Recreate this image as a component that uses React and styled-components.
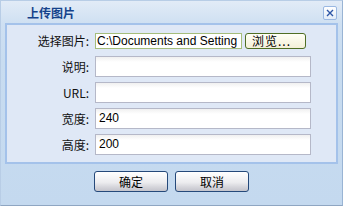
import React from "react";
import styled, { createGlobalStyle } from "styled-components";

const GlobalStyle = createGlobalStyle`
  html, body {
    margin: 0;
    padding: 0;
    background: #ffffff;
  }
  body {
    font-family: "Liberation Sans", "Noto Sans CJK SC", sans-serif;
    font-size: 12px;
  }
`;

const Dialog = styled.div`
  box-sizing: border-box;
  width: 343px;
  height: 206px;
  display: flex;
  flex-direction: column;
  background: linear-gradient(#e2ebf7 0px, #cfe0f2 22px, #c8dcf0 60px, #c4d9ef 100%);
  border: 1px solid #b8cde6;
  border-right-color: #99b4d4;
  border-bottom-color: #8fa6c2;
`;

const TitleBar = styled.div`
  height: 22px;
  display: flex;
  align-items: center;
  justify-content: space-between;
  padding: 0 5px 0 26px;
`;

const Title = styled.span`
  font-family: "Noto Sans CJK SC", sans-serif;
  font-weight: bold;
  font-size: 12px;
  color: #15428b;
  padding-top: 1px;
`;

const CloseButton = styled.button`
  box-sizing: border-box;
  width: 14px;
  height: 14px;
  padding: 0;
  margin-top: 1px;
  display: flex;
  align-items: center;
  justify-content: center;
  border: 1px solid #9ab8e2;
  border-radius: 2px;
  background: linear-gradient(#ffffff, #e2ecf8);
`;

const Panel = styled.div`
  margin: 0 4px 0 4px;
  border: 2px solid #a4c2ea;
  background: #dfe8f6;
  padding: 5px 24px 7px 0;
  display: grid;
  grid-template-columns: 82px 1fr;
  column-gap: 6px;
  row-gap: 5px;
`;

const Label = styled.label`
  font-family: "Noto Sans CJK SC", sans-serif;
  font-size: 12px;
  color: #111;
  text-align: right;
  line-height: 21px;
  height: 21px;
`;

const TextInput = styled.div`
  box-sizing: border-box;
  height: 21px;
  width: 216px;
  border: 1px solid #b5b8c8;
  background: linear-gradient(#f0f0f0 0px, #ffffff 5px);
  padding: 0 3px;
  line-height: 19px;
  font-family: "Liberation Sans", sans-serif;
  font-size: 12px;
  color: #000;
`;

const FileRow = styled.div`
  display: flex;
  align-items: center;
  gap: 3px;
`;

const FilePath = styled.div`
  box-sizing: border-box;
  width: 147px;
  height: 16px;
  border: 1px solid #a5bd7c;
  background: #fff;
  padding: 0 0 0 1px;
  line-height: 14px;
  font-family: "Liberation Sans", sans-serif;
  font-size: 12px;
  white-space: nowrap;
  overflow: hidden;
`;

const BrowseButton = styled.button`
  box-sizing: border-box;
  width: 61px;
  height: 16px;
  padding: 0 0 0 6px;
  border: 1px solid #4f6e24;
  border-radius: 3px;
  background: linear-gradient(#fffff6, #f3f0d8);
  font-family: "Noto Sans CJK SC", sans-serif;
  font-size: 12px;
  line-height: 13px;
  text-align: left;
  letter-spacing: 1px;
  color: #000;
`;

const Footer = styled.div`
  display: flex;
  justify-content: center;
  gap: 7px;
  padding: 7px 0 0 0;
`;

const Button = styled.button`
  box-sizing: border-box;
  width: 74px;
  height: 21px;
  padding: 0;
  border: 1px solid #25497a;
  border-radius: 3px;
  background: linear-gradient(#ffffff 0%, #ececef 55%, #d4d4da 80%, #c4c4cc 100%);
  font-family: "Noto Sans CJK SC", sans-serif;
  font-size: 12px;
  color: #000;
`;

const fields = [
  { label: "说明:", value: "" },
  { label: "URL:", value: "" },
  { label: "宽度:", value: "240" },
  { label: "高度:", value: "200" },
];

export default function App() {
  return (
    <>
      <GlobalStyle />
      <Dialog>
        <TitleBar>
          <Title>上传图片</Title>
          <CloseButton aria-label="close">
            <svg width="8" height="8" viewBox="0 0 8 8">
              <path d="M1 1 L7 7 M7 1 L1 7" stroke="#2c55a6" strokeWidth="1.4" />
            </svg>
          </CloseButton>
        </TitleBar>
        <Panel>
          <Label>选择图片:</Label>
          <FileRow>
            <FilePath>C:\Documents and Setting</FilePath>
            <BrowseButton>浏览...</BrowseButton>
          </FileRow>
          {fields.map((f) => (
            <React.Fragment key={f.label}>
              <Label>{f.label}</Label>
              <TextInput>{f.value}</TextInput>
            </React.Fragment>
          ))}
        </Panel>
        <Footer>
          <Button>确定</Button>
          <Button>取消</Button>
        </Footer>
      </Dialog>
    </>
  );
}
